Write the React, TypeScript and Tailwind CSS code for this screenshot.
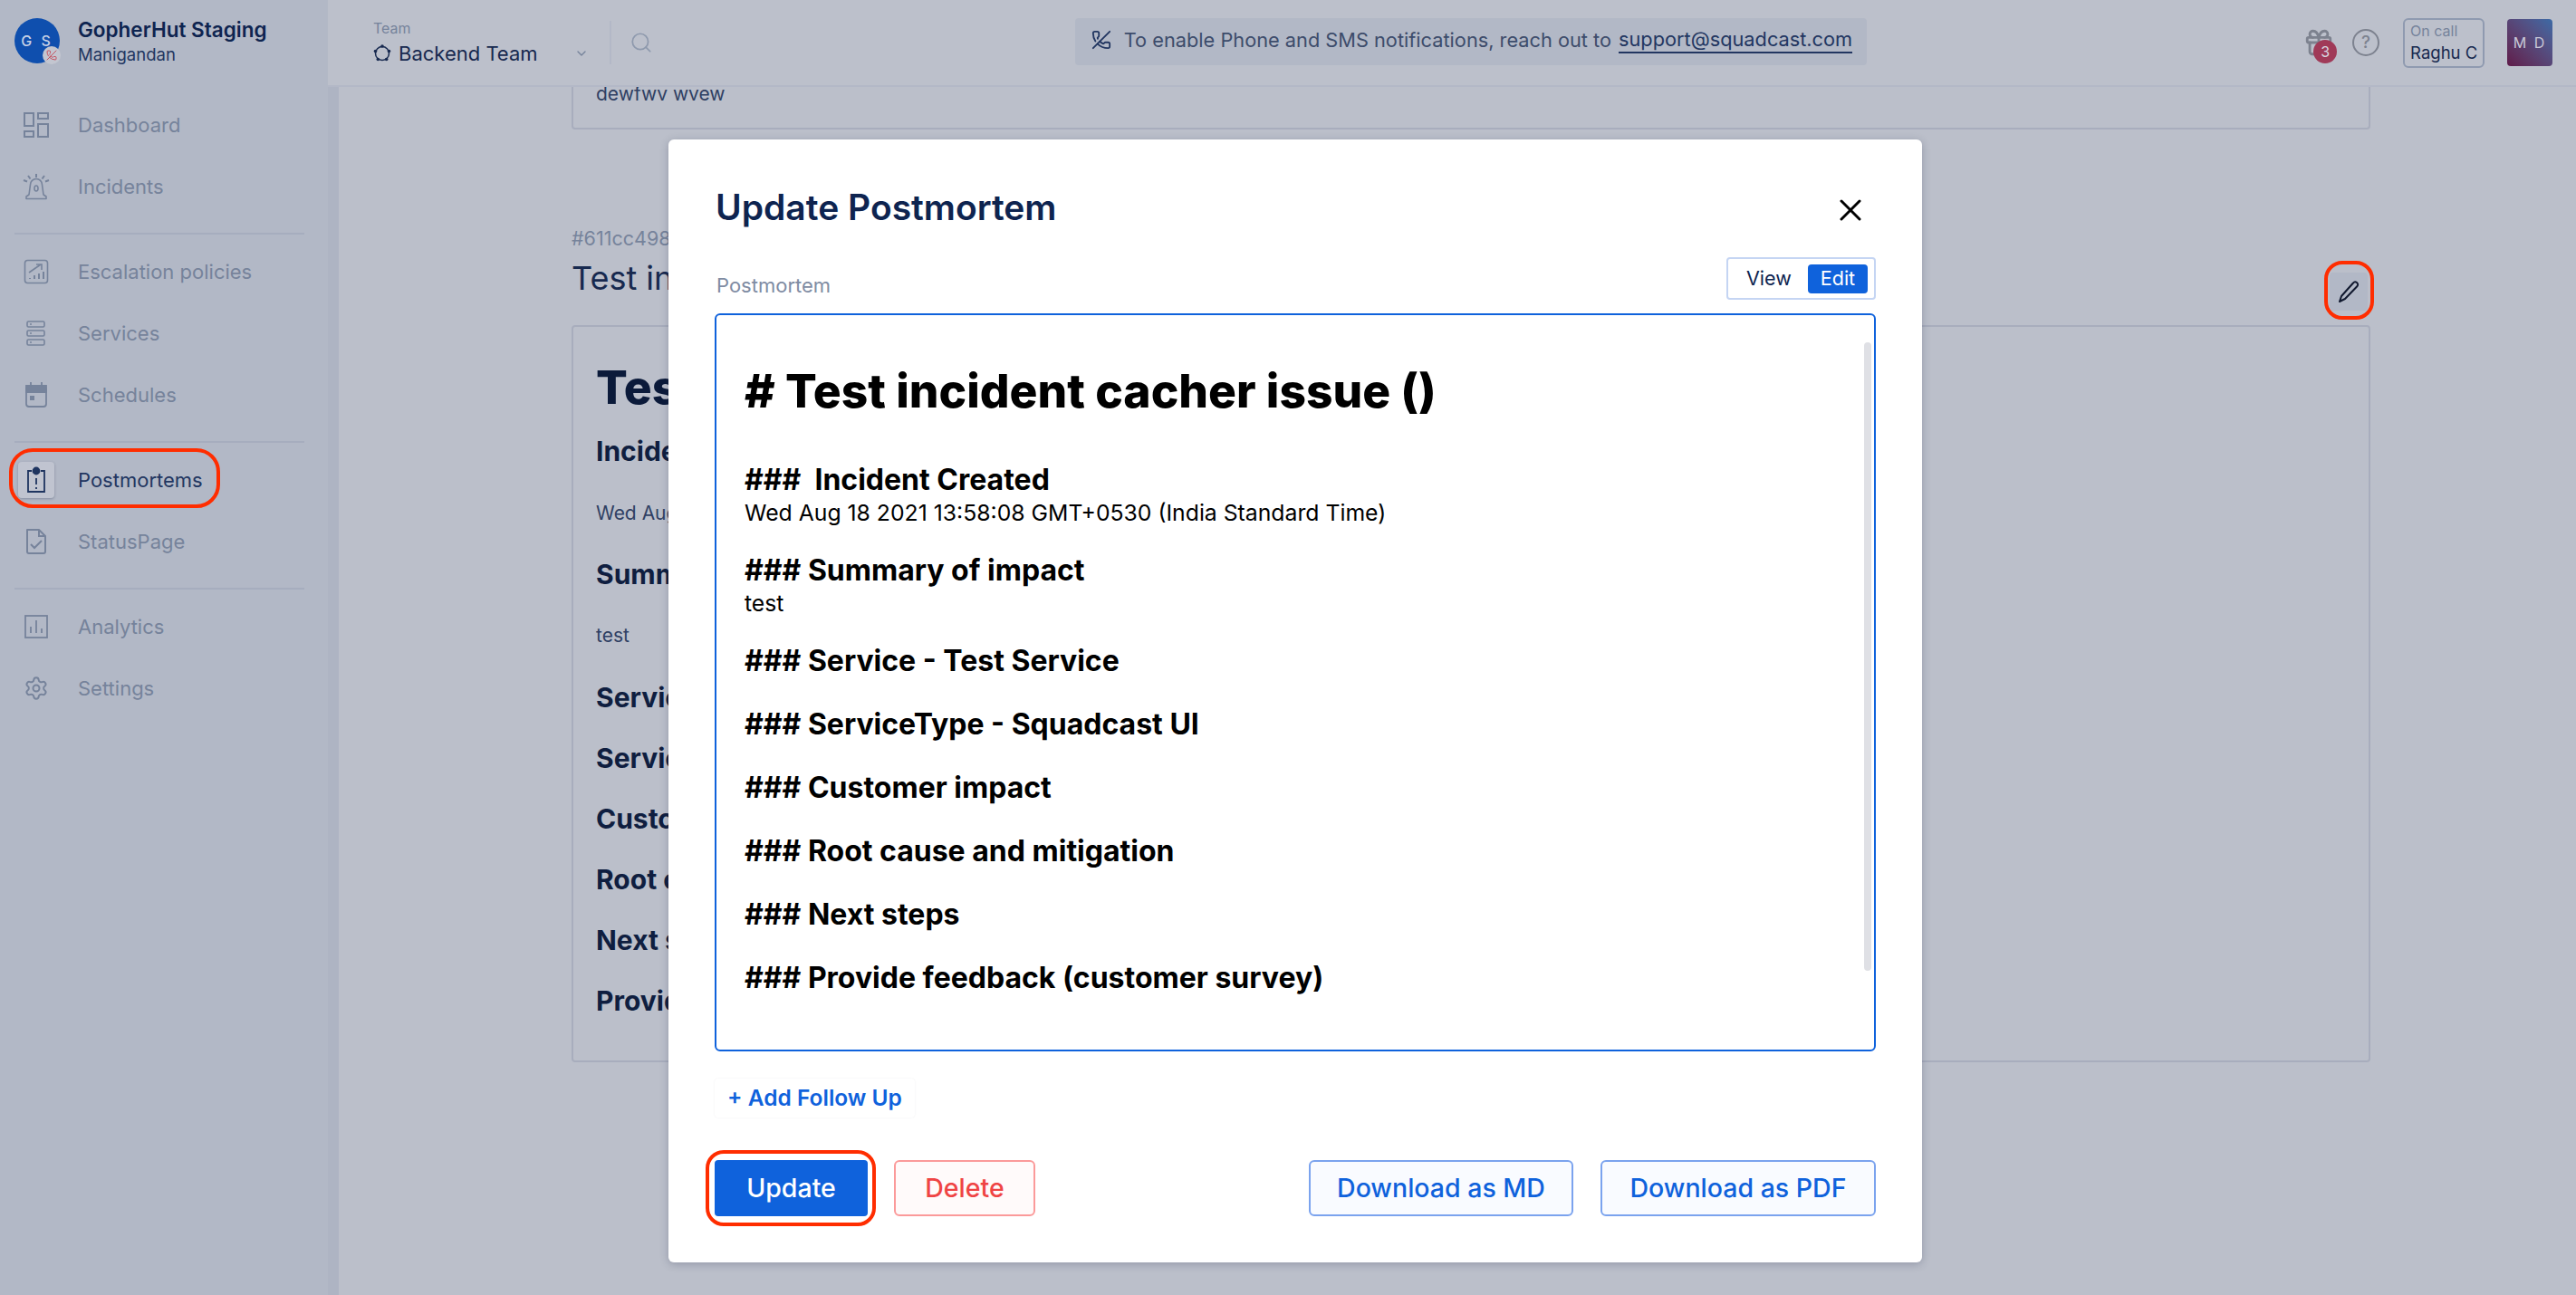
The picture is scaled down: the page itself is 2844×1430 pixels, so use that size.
import React from "react";
import { Gift, Search, ChevronDown, X, Settings, PhoneOff } from "lucide-react";

const DashboardIcon = () => (
	<svg width="28" height="28" viewBox="0 0 28 28" fill="none" stroke="currentColor" strokeWidth="2">
		<rect x="1" y="1" width="10" height="14" />
		<rect x="16" y="1" width="11" height="6" />
		<rect x="1" y="21" width="10" height="6" />
		<rect x="16" y="13" width="11" height="14" />
	</svg>
);

const SirenIcon = () => (
	<svg width="30" height="30" viewBox="0 0 30 30" fill="none" stroke="currentColor" strokeWidth="1.6">
		<path d="M4 28.5h22v-2.5l-3-2-1.5-11a6.5 6.5 0 0 0-13 0L7 24l-3 2z" strokeLinejoin="round" />
		<ellipse cx="15" cy="17" rx="2" ry="3" />
		<path d="M15 1v4M6 3l2.500 3.500M24 3l-2.500 3.500M1 8l4 1.500M29 8l-4 1.500" strokeWidth="2" />
	</svg>
);

const EscalationIcon = () => (
	<svg width="28" height="28" viewBox="0 0 28 28" fill="none" stroke="currentColor" strokeWidth="1.6">
		<rect x="1.500" y="1.500" width="25" height="25" rx="3" />
		<path d="M6 15 L19 6M14 6h6v6" />
		<path d="M7 22v-1M12 22v-4M17 22v-6M22 22v-8" strokeWidth="2" />
	</svg>
);

const ServicesIcon = () => (
	<svg width="28" height="28" viewBox="0 0 28 28" fill="none" stroke="currentColor" strokeWidth="1.6">
		<rect x="4" y="1" width="19" height="6" rx="1.500" />
		<rect x="4" y="11" width="19" height="6" rx="1.500" />
		<rect x="4" y="21" width="19" height="6" rx="1.500" />
		<path d="M7 4h2M7 14h2M7 24h2" />
	</svg>
);

const ScheduleIcon = () => (
	<svg width="28" height="30" viewBox="0 0 28 30" fill="none" stroke="currentColor" strokeWidth="1.800">
		<rect x="3" y="5" width="22" height="23" rx="3" />
		<path d="M3 5h22v7H3z" fill="currentColor" />
		<path d="M8 1v5M20 1v5" />
		<rect x="7" y="16" width="5" height="5" fill="currentColor" stroke="none" />
	</svg>
);

const PostmortemIcon = () => (
	<svg width="24" height="30" viewBox="0 0 24 30" fill="none" stroke="#1f3560" strokeWidth="1.800">
		<path d="M7 5H3v23h18V5h-4" />
		<circle cx="12" cy="5" r="3.500" fill="#1f3560" />
		<path d="M12 13v7M12 23v2" />
	</svg>
);

const StatusIcon = () => (
	<svg width="26" height="30" viewBox="0 0 26 30" fill="none" stroke="currentColor" strokeWidth="2">
		<path d="M3 2h13l7 7v17a2 2 0 0 1-2 2H5a2 2 0 0 1-2-2z" strokeLinejoin="round" />
		<path d="M16 2v7h7" />
		<path d="M7 18l4 4 8-8" />
	</svg>
);

const AnalyticsIcon = () => (
	<svg width="26" height="26" viewBox="0 0 26 26" fill="none" stroke="currentColor" strokeWidth="1.800">
		<rect x="1" y="1" width="24" height="24" />
		<path d="M7 20v-7M13 20V6M19 20v-5" />
	</svg>
);

const TeamIcon = () => (
	<svg width="20" height="22" viewBox="0 0 20 22" fill="#17294f" className="mr-[8px]">
		<circle cx="10" cy="11" r="7.500" fill="none" stroke="#17294f" strokeWidth="1.500" />
		<circle cx="10" cy="3" r="1.800" />
		<circle cx="17.500" cy="8.500" r="1.800" />
		<circle cx="14.700" cy="17.500" r="1.800" />
		<circle cx="5.300" cy="17.500" r="1.800" />
		<circle cx="2.500" cy="8.500" r="1.800" />
	</svg>
);

const navGroups = [
	[
		{ label: "Dashboard", icon: <DashboardIcon /> },
		{ label: "Incidents", icon: <SirenIcon /> },
	],
	[
		{ label: "Escalation policies", icon: <EscalationIcon /> },
		{ label: "Services", icon: <ServicesIcon /> },
		{ label: "Schedules", icon: <ScheduleIcon /> },
	],
	[
		{ label: "Postmortems", icon: <PostmortemIcon />, active: true },
		{ label: "StatusPage", icon: <StatusIcon /> },
	],
	[
		{ label: "Analytics", icon: <AnalyticsIcon /> },
		{ label: "Settings", icon: <Settings size={28} strokeWidth={1.7} /> },
	],
];

const NavItem = ({ label, icon, active }: { label: string; icon: React.ReactNode; active?: boolean }) => (
	<div className="relative flex h-[68px] items-center">
		<div
			className={
				active
					? "ml-[20px] flex h-[40px] w-[40px] items-center justify-center rounded-[4px] bg-[#c0c4d0] shadow-[0_1px_3px_rgba(30,40,70,0.3)]"
					: "ml-[20px] flex h-[40px] w-[40px] items-center justify-center text-[#76839b]"
			}
		>
			{icon}
		</div>
		<span className={active ? "ml-[26px] text-[22px] text-[#223661]" : "ml-[26px] text-[22px] text-[#76839b]"}>
			{label}
		</span>
		{active && (
			<div className="absolute top-[-1px] left-[10px] h-[66px] w-[233px] rounded-[26px] border-[4px] border-[#ff2d00]" />
		)}
	</div>
);

const Sidebar = () => (
	<aside className="h-full w-[362px] shrink-0 bg-[#b2b8c6]">
		<div className="flex h-[90px] items-center pl-[16px]">
			<div className="relative flex h-[50px] w-[50px] items-center justify-center rounded-full bg-[#0f4fae] text-[16px] font-medium tracking-[3px] text-[#c8d2e6]">
				G S
				<div className="absolute -right-[1px] -bottom-[1px] flex h-[20px] w-[20px] items-center justify-center rounded-full bg-[#c3c6d0] text-[#c4505f]">
					<PhoneOff size={12} />
				</div>
			</div>
			<div className="ml-[20px]">
				<div className="text-[22.500px] leading-[30px] font-semibold text-[#0e2450]">GopherHut Staging</div>
				<div className="text-[18.500px] leading-[24px] text-[#223661]">Manigandan</div>
			</div>
		</div>
		<div className="pt-[14px]">
			{navGroups.map((group, i) => (
				<div key={i}>
					{group.map((item) => (
						<NavItem key={item.label} {...item} />
					))}
					{i < navGroups.length - 1 && <div className="mx-[16px] mt-[17px] mb-[7px] h-[2px] w-[320px] bg-[#a6adbe]" />}
				</div>
			))}
		</div>
	</aside>
);

const Header = () => (
	<header className="flex h-[96px] shrink-0 items-center border-b-2 border-[#b3b8c7] bg-[#bcc0cb] pr-[26px] pl-[50px]">
		<div className="w-[261px]">
			<div className="text-[16px] leading-[22px] text-[#76839b]">Team</div>
			<div className="mt-[2px] flex items-center text-[22px] leading-[30px] text-[#17294f]">
				<TeamIcon />
				Backend Team
				<ChevronDown size={16} className="ml-[40px] text-[#76839b]" />
			</div>
		</div>
		<div className="h-[48px] w-[2px] bg-[#b3b8c7]" />
		<Search size={26} strokeWidth={1.600} className="ml-[20px] text-[#8e99ad]" />
		<div className="-mt-[2px] ml-[466px] flex h-[52px] w-[875px] items-center rounded-[4px] bg-[#b2b8c6] pb-[4px] pl-[18px] text-[21.750px] text-[#3d4c6b]">
			<PhoneOff size={22} className="mr-[14px] text-[#223661]" />
			To enable Phone and SMS notifications, reach out to
			<span className="ml-[8px] border-b-2 border-[#223661] leading-[28px] text-[#223661]">support@squadcast.com</span>
		</div>
		<div className="relative ml-[482px] text-[#7d828f]">
			<Gift size={34} strokeWidth={2} />
			<div className="absolute top-[14px] left-[11px] flex h-[26px] w-[26px] items-center justify-center rounded-full bg-[#a03a58] text-[16px] text-[#d9dbe2]">
				3
			</div>
		</div>
		<div className="ml-[20px] flex h-[30px] w-[30px] items-center justify-center rounded-full border-[2.500px] border-[#7d828f] text-[19px] font-medium text-[#7d828f]">
			?
		</div>
		<div className="ml-[26px] h-[55px] w-[90px] rounded-[6px] border-2 border-[#8f9ab0] pl-[6px]">
			<div className="text-[16px] leading-[24px] text-[#76839b]">On call</div>
			<div className="text-[18.500px] leading-[24px] whitespace-nowrap text-[#17294f]">Raghu C</div>
		</div>
		<div className="ml-[25px] flex h-[52px] w-[50px] items-center justify-center rounded-[4px] bg-gradient-to-tr from-[#5f1a4a] to-[#3a6aa6] text-[16px] tracking-[2px] text-[#c8c8d8]">
			M D
		</div>
	</header>
);

const sections = [
	{ title: "Incident Created", body: "Wed Aug 18 2021 13:58:08 GMT+0530 (India Standard Time)" },
	{ title: "Summary of impact", body: "test" },
	{ title: "Service - Test Service" },
	{ title: "ServiceType - Squadcast UI" },
	{ title: "Customer impact" },
	{ title: "Root cause and mitigation" },
	{ title: "Next steps" },
	{ title: "Provide feedback (customer survey)" },
];

const PageContent = () => (
	<main className="flex-1 overflow-hidden border-l-[12px] border-[#aeb4c3] bg-[#bbbfca] pr-[227px] pl-[257px]">
		<div className="h-[47px] rounded-b-[4px] border-x-2 border-b-2 border-[#a8adbd] pl-[25px] text-[21px] leading-[16px] text-[#2f3f63]">
			dewfwv wvew
		</div>
		<div className="relative mt-[106px] h-[110px]">
			<div className="text-[21.500px] leading-[28px] text-[#76839b]">#611cc498</div>
			<div className="mt-[7px] text-[36px] leading-[46px] text-[#17294f]">Test incident cacher issue ()</div>
			<div className="absolute top-[52px] right-[3px] flex h-[42px] w-[42px] items-center justify-center rounded-[4px] bg-[#b2b8c6]">
				<svg width="26" height="26" viewBox="0 0 26 26" fill="none" stroke="#10182e" strokeWidth="2" strokeLinejoin="round">
					<path d="M3 24l2-6L18 3.500a2.800 2.800 0 0 1 4.500 3.500L9 21z" />
				</svg>
			</div>
			<div className="absolute top-[39px] right-[-4px] h-[65px] w-[55px] rounded-[20px] border-[4px] border-[#ff2d00]" />
		</div>
		<div className="h-[814px] rounded-[4px] border-2 border-[#a8adbd] px-[25px] pt-[36px] text-[#0f1e40]">
			<div className="text-[51.500px] leading-[60px] font-extrabold text-[#0b1a3a]">Test incident cacher issue ()</div>
			<div className="mt-[21px] text-[30px] leading-[40px] font-bold">Incident Created</div>
			<div className="mt-[35px] text-[21px] leading-[28px] text-[#2f3f63]">Wed Aug 18 2021 13:58:08 GMT+0530 (India Standard Time)</div>
			<div className="mt-[33px] text-[30px] leading-[40px] font-bold">Summary of impact</div>
			<div className="mt-[34px] text-[21px] leading-[28px] text-[#2f3f63]">test</div>
			{sections.slice(2).map((s, i) => (
				<div key={s.title} className={i === 0 ? "mt-[34px] text-[30px] leading-[40px] font-bold" : "mt-[27px] text-[30px] leading-[40px] font-bold"}>
					{s.title}
				</div>
			))}
		</div>
	</main>
);

const Modal = () => (
	<div className="absolute inset-0 flex items-start justify-center pt-[154px] pl-[16px]">
		<div className="flex h-[1240px] w-[1384px] flex-col rounded-[6px] bg-white px-[51px] shadow-[0_2px_10px_rgba(30,40,70,0.25)]">
			<div className="flex h-[130px] items-center justify-between pt-[20px] pl-[1px]">
				<span className="text-[39px] font-semibold text-[#0e2450]">Update Postmortem</span>
				<X size={40} strokeWidth={1.800} className="mt-[6px] mr-[8px] text-[#000]" />
			</div>
			<div className="flex h-[62px] items-start justify-between pl-[2px]">
				<span className="mt-[17px] text-[22px] leading-[28px] text-[#7f8ca3]">Postmortem</span>
				<div className="flex h-[47px] w-[165px] items-center rounded-[4px] border-2 border-[#c5d5f3] pr-[7px] pl-[20px] text-[21.500px]">
					<span className="text-[#0e2450]">View</span>
					<span className="ml-auto flex h-[32px] w-[66px] items-center justify-center rounded-[4px] bg-[#0f62dc] text-white">Edit</span>
				</div>
			</div>
			<div className="relative h-[815px] rounded-[6px] border-2 border-[#0f62dc] pt-[50px] pl-[31px] text-black">
				<div className="text-[51.500px] leading-[66px] font-extrabold">{"# Test incident cacher issue ()"}</div>
				<div className="mt-[46px]">
					{sections.map((s, i) => (
						<div key={s.title} className={i === 0 ? "" : i <= 2 ? "mt-[28px]" : "mt-[30px]"}>
							<div className="text-[32px] leading-[40px] font-bold">
								{i === 0 ? "###\u00a0 " : "### "}
								{s.title}
							</div>
							{s.body && <div className="text-[24.750px] leading-[32px]">{s.body}</div>}
						</div>
					))}
				</div>
				<div className="absolute top-[30px] right-[3px] h-[694px] w-[8px] rounded-full bg-[#dfe0e5]" />
			</div>
			<div className="mt-[30px] flex h-[43px] w-[221px] items-center justify-center rounded-[4px] text-[24.500px] font-semibold text-[#0f62dc] shadow-[0_0_2px_rgba(30,40,70,0.08)]">
				+ Add Follow Up
			</div>
			<div className="mt-[47px] flex h-[62px] items-stretch text-[28.500px] font-medium">
				<div className="relative flex w-[169px] items-center justify-center rounded-[4px] bg-[#0f62dc] text-white">
					Update
					<div className="absolute -top-[11px] -left-[10px] h-[84px] w-[188px] rounded-[20px] border-[4px] border-[#ff2d00]" />
				</div>
				<div className="ml-[29px] flex w-[156px] items-center justify-center rounded-[6px] border-2 border-[#fb9a9a] bg-[#fffafa] text-[#ef4444]">
					Delete
				</div>
				<div className="ml-auto flex w-[292px] items-center justify-center rounded-[6px] border-2 border-[#7ba3ee] bg-[#f9fbff] text-[#0f62dc]">
					Download as MD
				</div>
				<div className="ml-[30px] flex w-[304px] items-center justify-center rounded-[6px] border-2 border-[#7ba3ee] bg-[#f9fbff] text-[#0f62dc]">
					Download as PDF
				</div>
			</div>
		</div>
	</div>
);

export default function App() {
	return (
		<div className="relative flex h-[1430px] w-[2844px] overflow-hidden font-['Inter',sans-serif]">
			<Sidebar />
			<div className="flex min-w-0 flex-1 flex-col">
				<Header />
				<PageContent />
			</div>
			<Modal />
		</div>
	);
}
